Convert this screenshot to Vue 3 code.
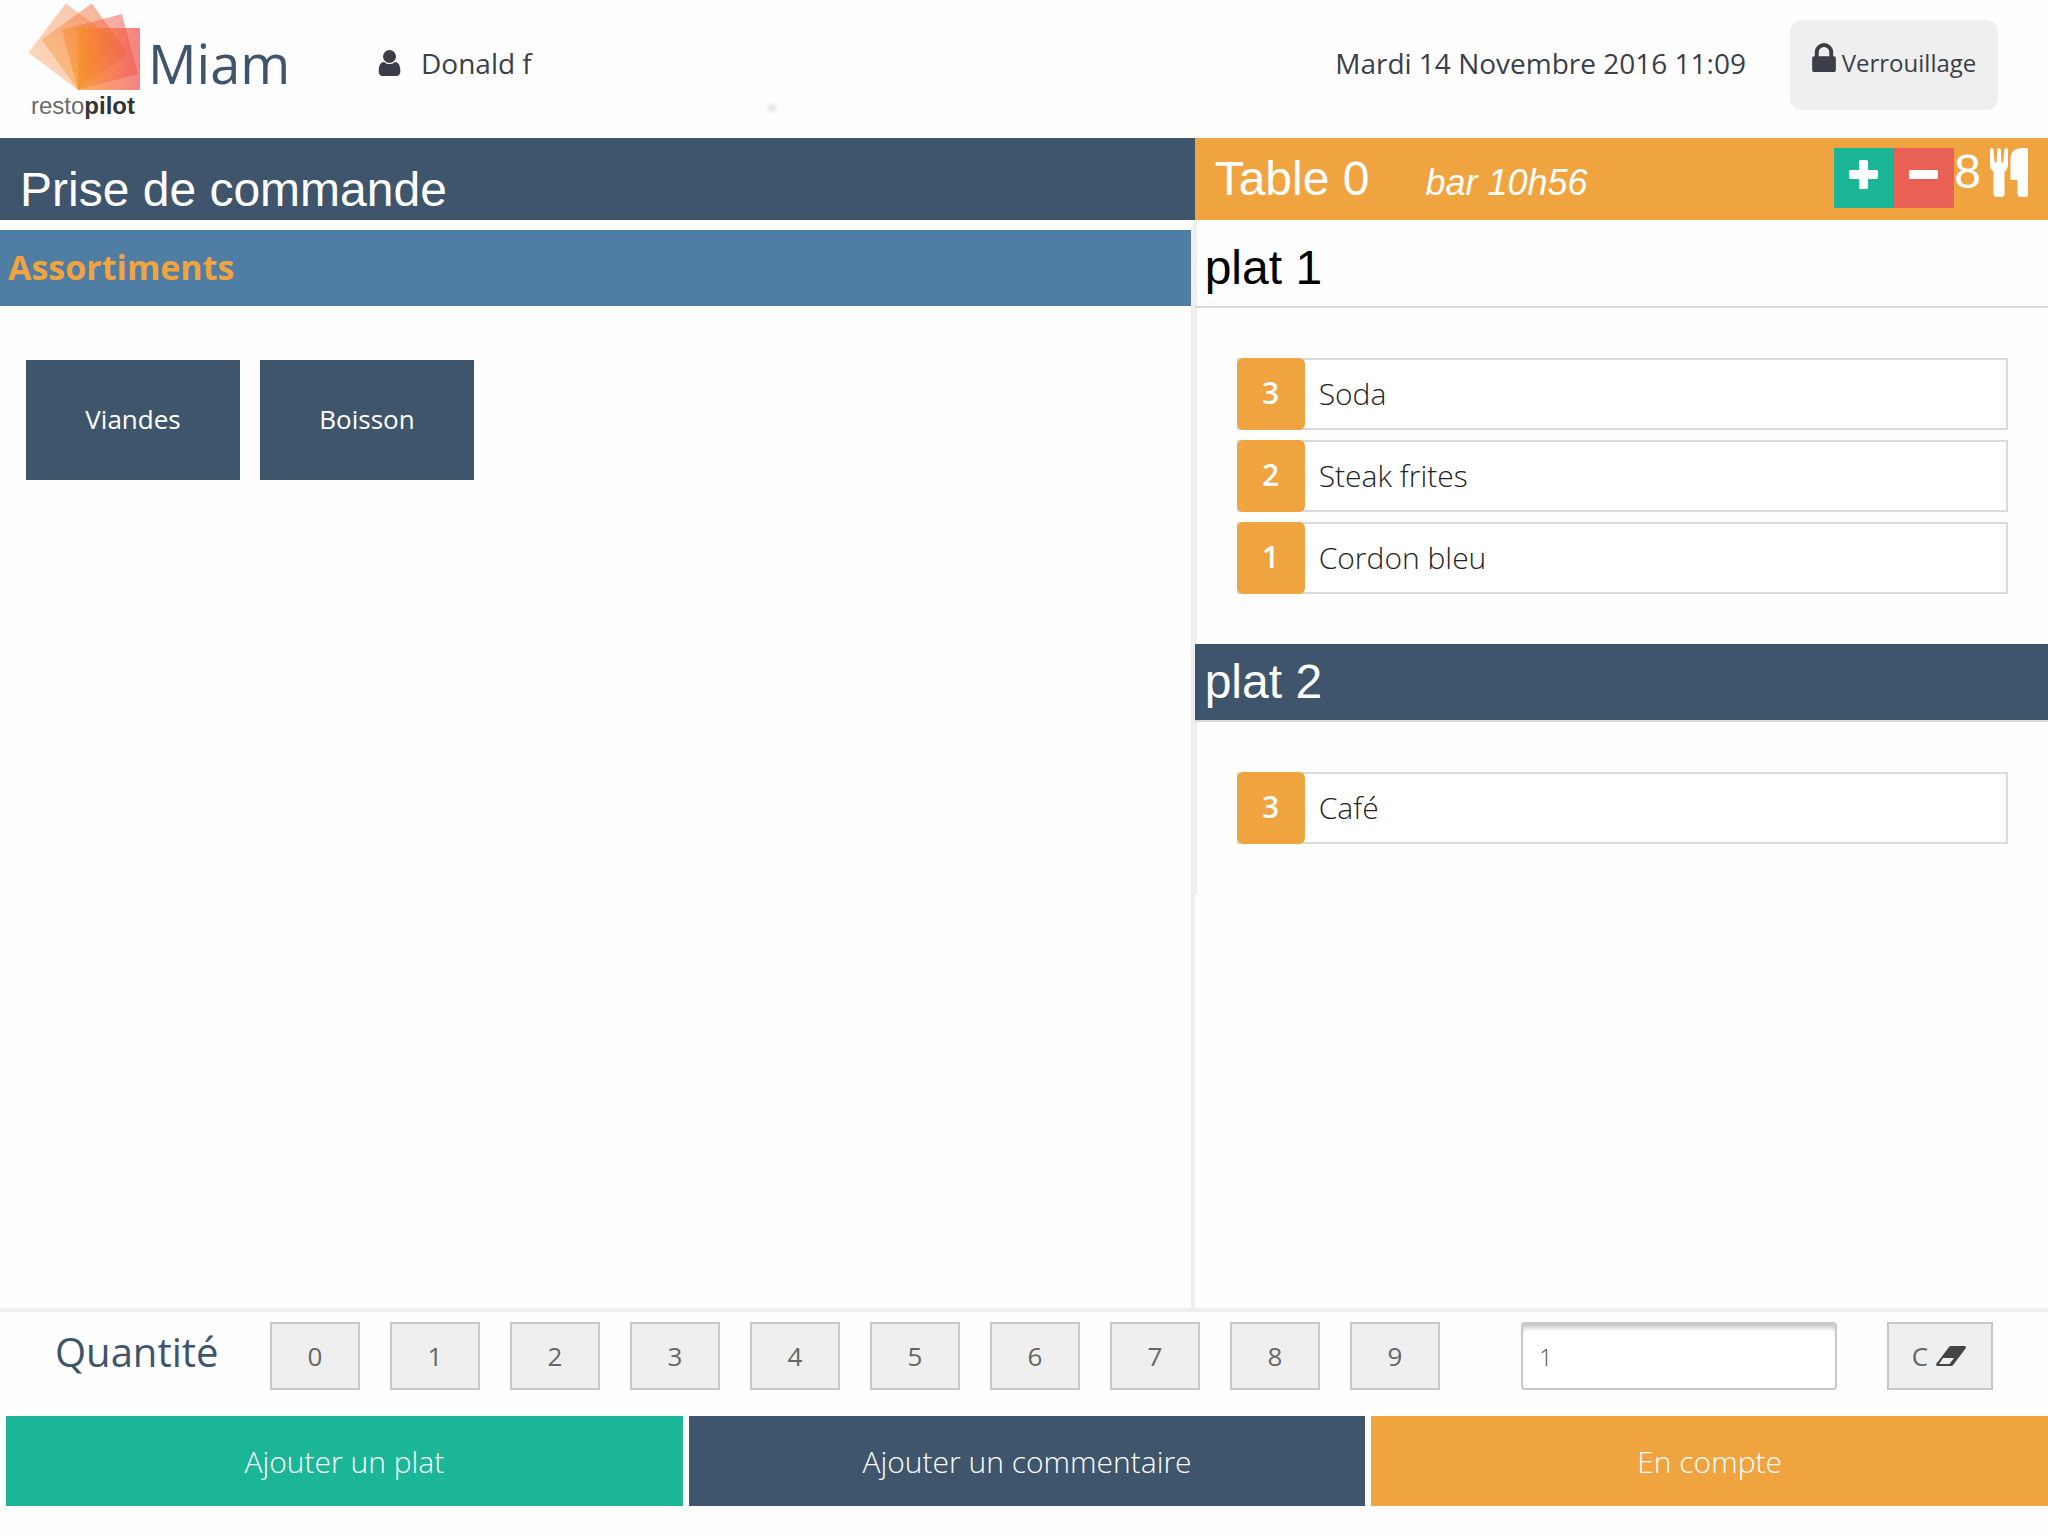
<script setup>
import { ref } from 'vue'

const digits = [0, 1, 2, 3, 4, 5, 6, 7, 8, 9]
const categories = ['Viandes', 'Boisson']
const quantity = ref('')
const covers = ref(8)
const courses = [
  {
    name: 'plat 1',
    active: false,
    items: [
      { qty: 3, label: 'Soda' },
      { qty: 2, label: 'Steak frites' },
      { qty: 1, label: 'Cordon bleu' },
    ],
  },
  { name: 'plat 2', active: true, items: [{ qty: 3, label: 'Café' }] },
]
</script>

<template>
  <div class="app">
    <header class="topbar">
      <div class="brand">
        <div class="logo">
          <svg class="logo-mark" viewBox="0 0 114 90" aria-hidden="true">
            <defs>
              <linearGradient id="sheet" x1="0" x2="1" y1="0" y2="0">
                <stop offset="0" stop-color="#f88f22" />
                <stop offset="1" stop-color="#f04e50" />
              </linearGradient>
              <linearGradient id="sheetPale" x1="0" x2="1" y1="0" y2="0">
                <stop offset="0" stop-color="#f9a04c" />
                <stop offset="1" stop-color="#f26a3c" />
              </linearGradient>
              <linearGradient id="sheetOrange" x1="0" x2="1" y1="0" y2="0">
                <stop offset="0" stop-color="#f8a060" />
                <stop offset="1" stop-color="#f58a50" />
              </linearGradient>
            </defs>
            <rect x="50" y="26" width="62" height="62" fill="url(#sheetOrange)" opacity=".45" transform="rotate(-53 50 88)" />
            <rect x="50" y="26" width="62" height="62" fill="url(#sheetPale)" opacity=".5" transform="rotate(-36 50 88)" />
            <rect x="50" y="26" width="62" height="62" fill="url(#sheet)" opacity=".5" transform="rotate(-15 50 88)" />
            <rect x="50" y="26" width="62" height="62" fill="url(#sheet)" opacity=".7" />
          </svg>
          <span class="logo-text">resto<b>pilot</b></span>
        </div>
        <h1 class="place">Miam</h1>
      </div>
      <div class="user">
        <svg class="user-icon" viewBox="0 128 1280 1536" aria-hidden="true">
          <path d="M1280 1399q0 109-62.500 187t-150.500 78h-854q-88 0-150.500-78t-62.500-187q0-85 8.500-160.500t31.500-152 58.500-131 94-89 134.500-34.500q131 128 313 128t313-128q76 0 134.500 34.500t94 89 58.500 131 31.500 152 8.500 160.500zm-256-887q0 159-112.500 271.500t-271.500 112.500-271.500-112.500-112.500-271.500 112.500-271.500 271.500-112.500 271.500 112.500 112.500 271.500z" />
        </svg>
        <span>Donald f</span>
      </div>
      <time class="clock" datetime="2016-11-14T11:09">Mardi 14 Novembre 2016 11:09</time>
      <button class="lock" type="button">
        <svg class="lock-icon" viewBox="0 128 1152 1408" aria-hidden="true">
          <path d="M320 768h512v-192q0-106-75-181t-181-75-181 75-75 181v192zm832 96v576q0 40-28 68t-68 28h-960q-40 0-68-28t-28-68v-576q0-40 28-68t68-28h32v-192q0-184 132-316t316-132 316 132 132 316v192h32q40 0 68 28t28 68z" />
        </svg>
        <span>Verrouillage</span>
      </button>
    </header>

    <main class="main">
      <section class="menu">
        <h2 class="menu-title">Prise de commande</h2>
        <h3 class="menu-group">Assortiments</h3>
        <div class="categories">
          <button v-for="c in categories" :key="c" class="category" type="button">{{ c }}</button>
        </div>
      </section>

      <section class="order">
        <div class="table-bar">
          <h2 class="table-name">Table 0</h2>
          <em class="table-place">bar 10h56</em>
          <div class="covers">
            <button class="step plus" type="button" aria-label="Ajouter un couvert" @click="covers++">
              <svg viewBox="0 0 29 29" aria-hidden="true">
                <rect x="10" y="0" width="9" height="29" rx="1.500" />
                <rect x="0" y="10" width="29" height="9" rx="1.500" />
              </svg>
            </button>
            <button class="step minus" type="button" aria-label="Retirer un couvert" @click="covers--">
              <svg viewBox="0 0 29 29" aria-hidden="true">
                <rect x="0" y="10" width="29" height="9" rx="1.500" />
              </svg>
            </button>
            <span class="covers-count">{{ covers }}</span>
            <svg class="cutlery" viewBox="0 0 38 49" aria-hidden="true">
              <path d="M0 1.500Q0 0 1.700 0T3.500 1.500L4.500 14Q5.700 15 6.700 14L7.200 1.500Q7.400 0 9 0T10.800 1.500L11.300 14Q12.300 15 13.300 14L14.500 1.500Q14.700 0 16.200 0T18 1.500V18Q18 21 14.500 24V46Q14.500 49 11.500 49H6.500Q3.500 49 3.500 46V24Q0 21 0 18Z" />
              <path d="M38 1.500V46Q38 49 35 49H30.500Q27.500 49 27.500 46V32H22Q20.500 32 20.500 30.500V11Q20.500 0 33 0H36.500Q38 0 38 1.500Z" />
            </svg>
          </div>
        </div>

        <div class="courses">
          <template v-for="course in courses" :key="course.name">
            <h3 class="course" :class="{ active: course.active }">{{ course.name }}</h3>
            <ul class="items">
              <li v-for="item in course.items" :key="item.label" class="item">
                <span class="qty">{{ item.qty }}</span>
                <span class="label">{{ item.label }}</span>
              </li>
            </ul>
          </template>
        </div>
      </section>
    </main>

    <footer class="footer">
      <div class="keypad">
        <label class="keypad-label" for="quantity">Quantité</label>
        <div class="keys">
          <button v-for="d in digits" :key="d" class="key" type="button" @click="quantity += d">{{ d }}</button>
        </div>
        <input id="quantity" v-model="quantity" class="quantity" type="text" placeholder="1" />
        <button class="key clear" type="button" @click="quantity = ''">
          <span>C</span>
          <svg class="eraser" viewBox="0 0 30 20" aria-hidden="true">
            <path fill-rule="evenodd" d="M14.500 0H28.500Q30.500 0 29.500 2.500L17.500 18.500Q16.500 20 15 20H1.500Q-.5 20 .5 17.500L13 1Q13.500 0 14.500 0ZM7 12L3 18H13.500L18 12Z" />
          </svg>
        </button>
      </div>
      <div class="actions">
        <button class="action add" type="button">Ajouter un plat</button>
        <button class="action comment" type="button">Ajouter un commentaire</button>
        <button class="action account" type="button">En compte</button>
      </div>
    </footer>
  </div>
</template>

<style>
body {
  margin: 0;
  background: #fefefe;
}
</style>

<style scoped>
.app {
  display: flex;
  flex-direction: column;
  min-height: 100vh;
  font-family: "Open Sans", "Noto Sans", sans-serif;
  color: #3b3e47;
}

.app * {
  box-sizing: border-box;
}

button {
  border: 0;
  padding: 0;
  font: inherit;
  color: inherit;
  cursor: pointer;
}

svg {
  display: block;
  fill: currentColor;
}

h1,
h2,
h3 {
  margin: 0;
  font-weight: 400;
}

/* Top bar, with a faint round speck near its lower edge */
.topbar {
  display: flex;
  align-items: center;
  height: 138px;
  padding: 0 50px 8px 28px;
  background: radial-gradient(circle at 772px 108px, #e4e4e4 0, #e4e4e400 7px);
  font-size: 28px;
}

.brand,
.user,
.clock {
  padding-bottom: 4px;
}

.brand {
  display: flex;
  align-items: center;
  width: 350px;
}

.logo {
  display: flex;
  flex-direction: column;
  width: 114px;
  margin-bottom: 4px;
}

.logo-mark {
  height: 90px;
  overflow: visible;
}

.logo-text {
  padding-left: 3px;
  font: 24px/28px "Liberation Sans", Arial, sans-serif;
  color: #6b6b6b;
}

.logo-text b {
  color: #333;
}

.place {
  padding-left: 6px;
  font-size: 54px;
  line-height: 72px;
  color: #3f556c;
}

.user {
  display: flex;
  align-items: center;
  gap: 20px;
  margin-right: auto;
}

.user-icon {
  width: 23px;
  height: 26px;
}

.lock {
  display: flex;
  justify-content: center;
  align-items: center;
  gap: 6px;
  width: 208px;
  height: 90px;
  margin-left: 44px;
  padding-bottom: 6px;
  border-radius: 12px;
  background: #efefef;
  font-size: 24px;
}

.lock-icon {
  width: 24px;
  height: 29px;
  margin-bottom: 10px;
}

/* Main area */
.main {
  flex: 1;
  display: grid;
  grid-template-columns: 7fr 5fr;
}

.menu {
  display: flex;
  flex-direction: column;
}

.menu-title,
.table-bar,
.course {
  font-family: "Liberation Sans", Arial, sans-serif;
  font-size: 48px;
  line-height: 56px;
  color: #fff;
}

.menu-title {
  height: 82px;
  padding: 24px 20px 0;
  background: #3f556c;
}

.menu-group {
  height: 86px;
  border-top: 10px solid #fefefe;
  border-right: 4px solid #efefef;
  padding: 0 8px;
  background: #507da4;
  font-size: 34px;
  font-weight: 700;
  line-height: 74px;
  color: #f0a43f;
}

.categories {
  flex: 1;
  display: flex;
  align-items: flex-start;
  gap: 20px;
  padding: 54px 26px;
  border-right: 4px solid #efefef;
}

.category {
  width: 214px;
  height: 120px;
  padding-bottom: 2px;
  background: #3f556c;
  font-size: 26px;
  color: #fff;
}

.table-bar {
  display: flex;
  align-items: baseline;
  height: 82px;
  padding: 13px 20px 0;
  background: #f0a43f;
}

.table-name {
  font-size: 48px;
}

.table-place {
  padding-left: 56px;
  font-size: 36px;
}

.covers {
  display: flex;
  align-self: flex-start;
  margin: -3px 0 0 auto;
}

.step {
  display: flex;
  justify-content: center;
  width: 60px;
  height: 60px;
  padding: 12px 2px 0 0;
}

.step svg {
  width: 29px;
  height: 29px;
}

.plus {
  background: #1bb698;
}

.minus {
  background: #e96154;
}

.covers-count {
  line-height: 48px;
}

.cutlery {
  width: 38px;
  height: 49px;
  margin-left: 9px;
}

.courses {
  padding-top: 10px;
  border-left: 2px solid #efefef;
}

.course {
  height: 78px;
  margin-left: -2px;
  padding: 10px;
  border-bottom: 2px solid #dadada;
  color: #000;
}

.course.active {
  background: #3f556c;
  color: #fff;
}

.items {
  display: flex;
  flex-direction: column;
  gap: 10px;
  margin: 0;
  padding: 50px 40px;
  list-style: none;
}

.item {
  display: flex;
  height: 72px;
  background: #fff;
  box-shadow: inset 0 0 0 2px #dadada;
  font-size: 30px;
  font-weight: 300;
  color: #222;
}

.qty {
  width: 68px;
  border-radius: 6px;
  background: #f0a43f;
  font-weight: 600;
  line-height: 70px;
  text-align: center;
  color: #fff;
}

.label {
  padding-left: 14px;
  line-height: 72px;
}

/* Keypad and actions */
.footer {
  border-top: 4px solid #efefef;
  padding: 10px 0 30px;
}

.keypad {
  display: flex;
  padding: 0 55px;
}

.keypad-label {
  width: 215px;
  font-size: 40px;
  line-height: 60px;
  color: #3f556c;
}

.keys {
  display: flex;
  gap: 30px;
}

.key {
  width: 90px;
  height: 68px;
  border: 2px solid #c8c8c8;
  background: #efefef;
  font-size: 26px;
  color: #666;
}

.quantity {
  flex: 1;
  min-width: 0;
  height: 68px;
  margin: 0 50px 0 81px;
  padding: 0 16px;
  border: 2px solid #c8c8c8;
  border-radius: 4px;
  background: #fff;
  box-shadow: inset 0 7px 5px -3px #c8c8c8;
  font: 300 24px "Open Sans", sans-serif;
  color: #555;
}

.quantity::placeholder {
  color: #555;
}

.clear {
  display: flex;
  justify-content: center;
  align-items: center;
  gap: 8px;
  width: 106px;
  padding-right: 2px;
}

.eraser {
  width: 30px;
  height: 20px;
  color: #444;
}

.actions {
  display: flex;
  gap: 6px;
  margin-top: 26px;
  padding-left: 6px;
}

.action {
  flex: 1;
  height: 90px;
  font-size: 30px;
  font-weight: 300;
  color: #fff;
}

.add {
  background: #1bb698;
}

.comment {
  background: #3f556c;
}

.account {
  background: #f0a43f;
}
</style>
